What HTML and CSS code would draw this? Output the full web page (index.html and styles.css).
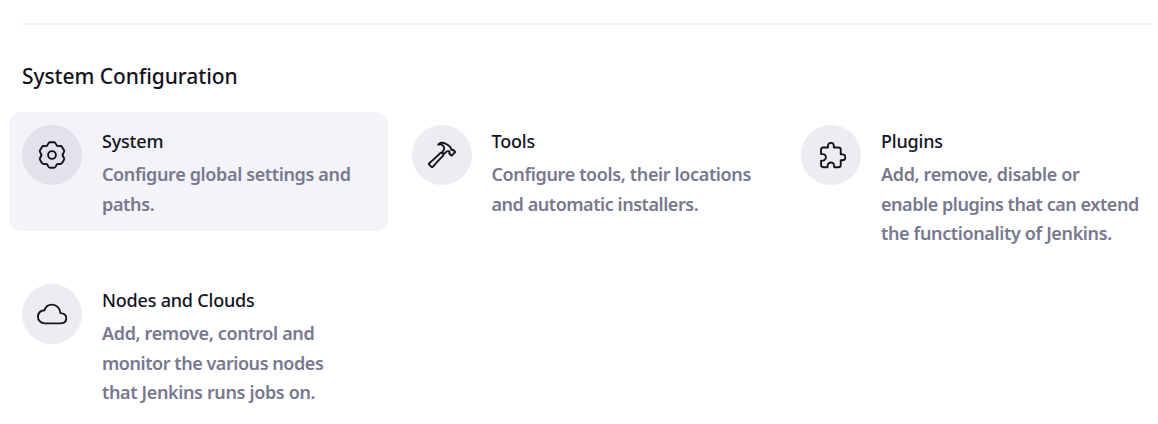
FILE: index.html
```html
<!DOCTYPE html>
<html lang="en">
<head>
<meta charset="utf-8">
<title>System Configuration</title>
<link rel="stylesheet" href="styles.css">
</head>
<body>
<main class="page">
  <hr class="divider">
  <h2 class="heading">System Configuration</h2>
  <div class="grid">
    <a class="item item-active">
      <span class="badge"><svg class="icon" viewBox="-46 -46 92 92"><g stroke-width="5.8"><path id="tooth" d="M-16.3-28.2Q-13.5-29.8-11.8-34.5Q-10-39-6-39H6Q10-39 11.8-34.5Q13.5-29.8 16.3-28.2"/><use href="#tooth" transform="rotate(60)"/><use href="#tooth" transform="rotate(120)"/><use href="#tooth" transform="rotate(180)"/><use href="#tooth" transform="rotate(240)"/><use href="#tooth" transform="rotate(300)"/><circle r="12"/></g></svg></span>
      <span class="text"><strong class="title">System</strong><span class="desc">Configure global settings and<br>paths.</span></span>
    </a>
    <a class="item">
      <span class="badge"><svg class="icon" viewBox="0 0 512 512"><path d="M277.42 247a24.68 24.68 0 00-4.08-5.47L255 223.44a21.63 21.63 0 00-6.56-4.57 20.93 20.93 0 00-23.28 4.27c-6.36 6.26-18 17.68-39 38.43C146 301.3 71.43 367.89 37.71 396.29a16 16 0 00-1.09 23.54l39 39.43a16.13 16.13 0 0023.67-.89c29.24-34.37 96.3-109 136-148.23 20.39-20.06 31.82-31.58 38.29-37.94a21.76 21.76 0 003.84-25.2zM478.43 201l-34.31-34a5.44 5.44 0 00-4-1.59 5.59 5.59 0 00-4 1.59h0a11.41 11.41 0 01-9.55 3.27c-4.48-.49-9.25-1.88-12.33-4.86-7-6.86 1.09-20.36-5.07-29a242.88 242.88 0 00-23.08-26.72c-7.06-7-34.81-33.47-81.55-52.53a123.79 123.79 0 00-47-9.24c-26.35 0-46.61 11.76-54 18.51-5.88 5.32-12 13.77-12 13.77a91.29 91.29 0 0110.81-3.2 79.53 79.53 0 0123.28-1.49C241.19 76.8 259.94 84.1 270 92c16.21 13 23.18 30.39 24.27 52.83.8 16.69-15.23 37.76-30.44 54.94a7.85 7.85 0 00.4 10.83l21.24 21.23a8 8 0 0011.14.1c13.93-13.51 31.09-28.47 40.82-34.46s17.58-7.68 21.35-8.09a35.71 35.71 0 0121.3 4.62 13.65 13.65 0 013.08 2.38c6.46 6.56 6.07 17.28-.5 23.74l-2 1.89a5.5 5.5 0 000 7.84l34.31 34a5.5 5.5 0 004 1.58 5.65 5.65 0 004-1.58L478.43 209a5.69 5.69 0 000-8z"/></svg></span>
      <span class="text"><strong class="title">Tools</strong><span class="desc">Configure tools, their locations<br><span class="snug">and automatic installers.</span></span></span>
    </a>
    <a class="item">
      <span class="badge"><svg class="icon" viewBox="-38 0 512 512"><path d="M413.66 246.1H386a2 2 0 01-2-2v-77.24A38.86 38.86 0 00345.14 128H267.9a2 2 0 01-2-2V98.34c0-27.14-21.5-49.86-48.64-50.33a49.53 49.53 0 00-50.4 49.51V126a2 2 0 01-2 2H87.62A39.74 39.74 0 0048 167.62V238a2 2 0 002 2h26.91c29.37 0 53.68 25.48 54.09 54.85.42 29.87-23.51 57.15-53.29 57.15H50a2 2 0 00-2 2v70.38A39.74 39.74 0 0087.62 464H158a2 2 0 002-2v-20.93c0-30.28 24.75-56.35 55-57.06 30.1-.7 57 20.31 57 50.28V462a2 2 0 002 2h71.14A38.86 38.86 0 00384 425.14v-78a2 2 0 012-2h28.48c27.63 0 49.52-22.67 49.52-50.4s-23.2-48.64-50.34-48.64z"/></svg></span>
      <span class="text"><strong class="title">Plugins</strong><span class="desc">Add, remove, disable or<br><span class="snug">enable plugins that can extend</span><br>the functionality of Jenkins.</span></span>
    </a>
    <a class="item">
      <span class="badge"><svg class="icon" viewBox="0 0 512 512"><path d="M400 240c-8.89-89.54-71-144-144-144-69 0-113.44 48.2-128 96-60 6-112 43.59-112 112 0 66 54 112 120 112h260c55 0 104-27.77 104-88 0-59.82-53-85.76-100-88z"/></svg></span>
      <span class="text"><strong class="title">Nodes and Clouds</strong><span class="desc">Add, remove, control and<br><span class="snug">monitor the various nodes</span><br>that Jenkins runs jobs on.</span></span>
    </a>
  </div>
</main>
</body>
</html>
```
FILE: styles.css
```css
body {
  margin: 0;
  background: #fff;
  color: #14141f;
  font-family: "Noto Sans", sans-serif;
}
.page {
  padding: 23px 4px 0 22px;
}
.divider {
  height: 2px;
  margin: 0;
  border: 0;
  background: #f3f3f8;
}
.heading {
  margin: 36px 0 0;
  font-size: 21px;
  line-height: 30px;
  font-weight: 500;
  letter-spacing: -0.08px;
}
.grid {
  display: grid;
  grid-template-columns: repeat(3, 379px);
  grid-template-rows: 149px auto;
  column-gap: 10.5px;
  row-gap: 10px;
  align-items: start;
  margin: 21px 0 0 -13px;
}
.item {
  display: flex;
  gap: 20px;
  box-sizing: border-box;
  min-height: 119px;
  padding: 13px 13px 10px;
  border-radius: 12px;
}
.item-active {
  background: #f3f3f8;
}
.badge {
  display: flex;
  flex: none;
  align-items: center;
  justify-content: center;
  width: 60px;
  height: 60px;
  border-radius: 50%;
  background: #ecedf3;
}
.item-active .badge {
  background: #e2e2ed;
}
.icon {
  width: 30px;
  height: 30px;
  fill: none;
  stroke: #14141f;
  stroke-width: 32;
  stroke-linecap: round;
  stroke-linejoin: round;
}
.text {
  display: flex;
  flex-direction: column;
  padding-top: 3px;
  white-space: nowrap;
}
.title {
  font-size: 18px;
  line-height: 26px;
  font-weight: 500;
  letter-spacing: -0.2px;
}
.desc {
  margin-top: 6px;
  color: #78788f;
  font-size: 18px;
  line-height: 29.5px;
  font-weight: 600;
  letter-spacing: -0.36px;
}
.snug {
  letter-spacing: -0.45px;
}
```
